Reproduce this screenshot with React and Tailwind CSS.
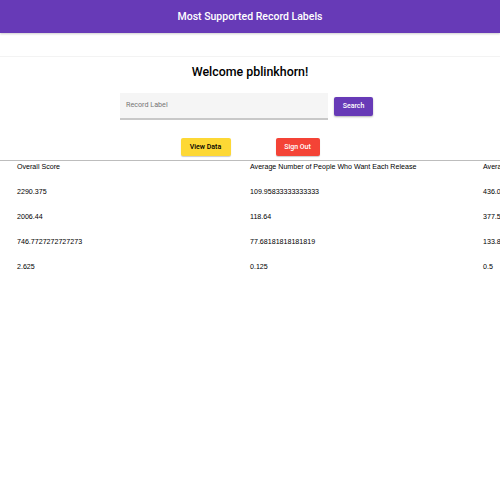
export default function App() {
  const rows = [
    ["2290.375", "109.95833333333333", "436.0"],
    ["2006.44", "118.64", "377.5"],
    ["746.7727272727273", "77.68181818181819", "133.8"],
    ["2.625", "0.125", "0.5"],
  ];
  return (
    <div className="w-[500px] h-[500px] bg-white overflow-hidden" style={{ fontFamily: "Roboto, 'Liberation Sans', sans-serif" }}>
      <div className="h-[33px] bg-[#673ab7] flex items-center justify-center shadow-[0_1px_2px_rgba(0,0,0,0.2)]">
        <span className="text-white font-medium text-[10.5px]">Most Supported Record Labels</span>
      </div>
      <div className="h-[24px] border-b border-[#f3f3f3]"></div>
      <div className="flex justify-center mt-[6px]">
        <h1 className="text-[12.4px] font-medium text-black leading-[18px]">Welcome pblinkhorn!</h1>
      </div>
      <div className="flex justify-center items-center gap-[6px] mt-[12px] mr-[7px]">
        <div className="w-[208px] h-[27px] bg-[#f5f5f5] border-b-2 border-[#c8c8c8] flex items-center px-[6px]">
          <span className="text-[7.2px] text-[#757575]">Record Label</span>
        </div>
        <button className="w-[39px] h-[19px] bg-[#673ab7] rounded-[2px] text-white text-[7px] font-medium shadow-[0_1px_2px_rgba(0,0,0,0.3)] mb-[1px]">Search</button>
      </div>
      <div className="flex justify-center gap-[45px] mt-[18px]">
        <button className="w-[50px] h-[18px] bg-[#fdd835] rounded-[2px] text-black text-[7px] font-medium shadow-[0_1px_1px_rgba(0,0,0,0.2)]">View Data</button>
        <button className="w-[44px] h-[18px] bg-[#f44336] rounded-[2px] text-white text-[7px] font-medium shadow-[0_1px_1px_rgba(0,0,0,0.2)]">Sign Out</button>
      </div>
      <div className="mt-[4px] border-t border-[#bdbdbd] overflow-hidden" style={{ fontFamily: "'Liberation Sans', Arial, sans-serif" }}>
        <div className="grid grid-cols-[233px_233px_233px] pl-[17px] pt-[1px] text-[7.1px] text-black">
          <div className="h-[25px]">Overall Score</div>
          <div className="h-[25px] whitespace-nowrap">Average Number of People Who Want Each Release</div>
          <div className="h-[25px] whitespace-nowrap">Average Number of People Who Have Each Release</div>
          {rows.map((r, i) => (
            <>
              <div key={"a" + i} className="h-[25px]">{r[0]}</div>
              <div key={"b" + i} className="h-[25px]">{r[1]}</div>
              <div key={"c" + i} className="h-[25px]">{r[2]}</div>
            </>
          ))}
        </div>
      </div>
    </div>
  );
}
